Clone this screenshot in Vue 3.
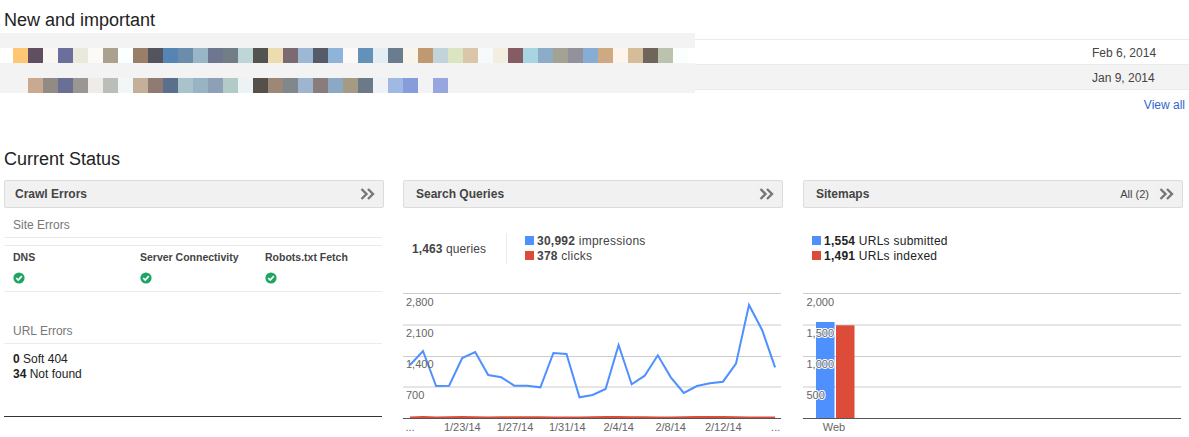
<script setup>
const rowA = ['#ffc675','#5f4f60','#f9f6f4','#6a6f9b','#ebe8dc','#fbfaf6','#aca08e','#fcffff','#9a7f68','#54545e','#5585b5','#6b8dab','#98b6c8','#6f7690','#727e85','#bfd6d9','#53544f','#ecdcb0','#7b6b70','#9db8d4','#575a68','#8eb4da','#fbfaf8','#6391ba','#e3eef4','#6a7d8e','#f9f5ea','#c19971','#c2d4da','#dbe5c2','#dac7a8','#f6fafd','#f2eee0','#835c64','#a9d5e3','#8cacc8','#a4a195','#92919c','#87add4','#cfa981','#fdf4ec','#d4bd98','#6f655b','#bbc3ae','#fafefd']
const rowB = ['transparent','#c9aa90','#918b84','#6a6f96','#9a9793','#efebe6','#babeb8','#f1f6f6','#c4af98','#8f7b72','#596f8c','#a9c3cd','#98b3c3','#8ea0b5','#b3cbc7','#edf2f4','#55504a','#9d8878','#80888b','#9db5cf','#8a7c7c','#8ba9c5','#a59b84','#6b7a89','#eef2f5','#a0b9e2','#879cdb','transparent','#98a6e0']

const checks = [
  { name: 'DNS', width: 127 },
  { name: 'Server Connectivity', width: 125 },
  { name: 'Robots.txt Fetch', width: 110 }
]

// y values of the impressions line, in page pixels
const impressions = [365,351,386,385.7,358,352,375,377.3,385.7,385.7,387.3,353,354,397.3,395,389,345,384.3,375.7,355.3,377.3,393,386,383.3,381.7,363.7,305,330,367.3]
const blueLine = impressions.map((y, i) => `${(7 + i * 13.04).toFixed(1)},${(y - 293).toFixed(1)}`).join(' ')
const clicks = [124.4,124,124.4,124.2,124.1,124.2,124.4,124.3,124.2,124.2,124.3,124.4,124.4,124.4,124.2,124.1,124.1,124.2,124.3,124.4,124.4,124.3,124,123.9,124.1,124.3,124.4,124.4,124.4]
const redLine = clicks.map((y, i) => `${(7 + i * 13.04).toFixed(1)},${y}`).join(' ')

const grid = [0.5, 32, 63.5, 94]
const queryTicks = [
  { label: '2,800', y: 12.5 }, { label: '2,100', y: 43.5 }, { label: '1,400', y: 74.5 }, { label: '700', y: 105.5 }
]
const mapTicks = [
  { label: '2,000', y: 12.5 }, { label: '1,500', y: 43.5 }, { label: '1,000', y: 74.5 }, { label: '500', y: 105.5 }
]
const dates = [
  { label: '...', x: 7 }, { label: '1/23/14', x: 59.3 }, { label: '1/27/14', x: 112 }, { label: '1/31/14', x: 164.3 },
  { label: '2/4/14', x: 215.7 }, { label: '2/8/14', x: 267.7 }, { label: '2/12/14', x: 320.3 }, { label: '...', x: 372.7 }
]
</script>

<template>
  <div class="page">
    <h2 class="heading">New and important</h2>
    <div class="messages">
      <div class="msg"><span>Feb 6, 2014</span></div>
      <div class="msg shaded"><span>Jan 9, 2014</span></div>
      <div class="blurred">
        <div class="band"></div>
        <div class="swatches">
          <i v-for="(c, i) in rowA" :key="i" :style="{ background: c }"></i>
        </div>
        <div class="band"></div>
        <div class="swatches grey">
          <i v-for="(c, i) in rowB" :key="i" :style="{ background: c }"></i>
        </div>
      </div>
    </div>
    <div class="view-all"><a>View all</a></div>

    <h2 class="heading status">Current Status</h2>
    <div class="panels">
      <section class="panel">
        <header class="bar">
          <span class="title">Crawl Errors</span>
          <svg class="chev" width="15" height="12" viewBox="0 0 15 12"><path d="M1.5 1l5 5-5 5M8 1l5 5-5 5" fill="none" stroke="#777" stroke-width="2.4"/></svg>
        </header>
        <h3 class="sub">Site Errors</h3>
        <div class="checks">
          <div v-for="c in checks" :key="c.name" class="check" :style="{ width: c.width + 'px' }">
            <div class="check-name">{{ c.name }}</div>
            <svg width="12" height="12" viewBox="0 0 12 12"><circle cx="6" cy="6" r="5.6" fill="#1fa463"/><path d="M3.2 6l2 2 3.6-3.8" fill="none" stroke="#fff" stroke-width="1.7"/></svg>
          </div>
        </div>
        <h3 class="sub url">URL Errors</h3>
        <div class="url-list">
          <div><b>0</b> Soft 404</div>
          <div><b>34</b> Not found</div>
        </div>
      </section>

      <section class="panel">
        <header class="bar">
          <span class="title">Search Queries</span>
          <svg class="chev" width="15" height="12" viewBox="0 0 15 12"><path d="M1.5 1l5 5-5 5M8 1l5 5-5 5" fill="none" stroke="#777" stroke-width="2.4"/></svg>
        </header>
        <div class="summary">
          <div class="total"><b>1,463</b> queries</div>
          <div class="legend">
            <div><i class="blue"></i><b>30,992</b> impressions</div>
            <div><i class="red"></i><b>378</b> clicks</div>
          </div>
        </div>
        <svg class="chart" width="378" height="144" viewBox="0 0 378 144">
          <line v-for="y in grid" :key="y" x1="0" x2="378" :y1="y" :y2="y" stroke="#ccc" />
          <polyline :points="blueLine" fill="none" stroke="#4d90fe" stroke-width="2" />
          <text v-for="t in queryTicks" :key="t.label" x="3" :y="t.y" class="tick">{{ t.label }}</text>
          <polyline :points="redLine" fill="none" stroke="#dd4b39" stroke-width="2" />
          <line x1="0" x2="378" y1="125.5" y2="125.5" stroke="#555" />
          <text v-for="(d, i) in dates" :key="i" :x="d.x" y="138" class="tick" text-anchor="middle">{{ d.label }}</text>
        </svg>
      </section>

      <section class="panel last">
        <header class="bar">
          <span class="title">Sitemaps</span>
          <span class="all">All (2)</span>
          <svg class="chev" width="15" height="12" viewBox="0 0 15 12"><path d="M1.5 1l5 5-5 5M8 1l5 5-5 5" fill="none" stroke="#777" stroke-width="2.4"/></svg>
        </header>
        <div class="summary maps">
          <div class="legend">
            <div><i class="blue"></i><b>1,554</b> URLs submitted</div>
            <div><i class="red"></i><b>1,491</b> URLs indexed</div>
          </div>
        </div>
        <svg class="chart" width="378" height="144" viewBox="0 0 378 144">
          <line v-for="y in grid" :key="y" x1="0" x2="378" :y1="y" :y2="y" stroke="#ccc" />
          <rect x="13" y="29" width="18.5" height="96" fill="#4d90fe" />
          <rect x="33" y="32.3" width="18.5" height="92.7" fill="#dd4b39" />
          <text v-for="t in mapTicks" :key="t.label" x="3.5" :y="t.y" class="tick halo">{{ t.label }}</text>
          <line x1="0" x2="378" y1="125.5" y2="125.5" stroke="#555" />
          <text x="31" y="138" class="tick" text-anchor="middle">Web</text>
        </svg>
      </section>
    </div>
  </div>
</template>

<style>
html, body {
  margin: 0;
  background: #fff;
  overflow: hidden;
}
</style>

<style scoped>
.page {
  width: 1189px;
  height: 437px;
  overflow: hidden;
  font-family: "Liberation Sans", Arial, sans-serif;
  font-size: 12px;
  color: #222;
}

.heading {
  margin: 0;
  padding: 10px 0 0 4px;
  height: 21px;
  line-height: 21px;
  font-size: 18px;
  font-weight: normal;
  color: #222;
}

.messages {
  position: relative;
  margin-top: 8px;
}

.msg {
  box-sizing: border-box;
  height: 25px;
  border-top: 1px solid #ebebeb;
  display: flex;
  align-items: center;
  padding: 2px 0 0 1092px;
  color: #444;
}

.shaded {
  background: #f3f3f3;
  height: 26px;
  border-bottom: 1px solid #ebebeb;
  padding-top: 1px;
}

.blurred {
  position: absolute;
  left: 0;
  top: -6px;
  width: 695px;
  background: #fff;
}

.band {
  height: 15px;
  background: #f3f3f3;
}

.swatches {
  display: flex;
  height: 15px;
  padding-left: 13px;
}

.swatches.grey {
  background: #f3f3f3;
}

.swatches i {
  display: block;
  width: 15px;
  height: 15px;
}

.view-all {
  margin-top: 8px;
  padding-right: 4px;
  height: 14px;
  line-height: 14px;
  text-align: right;
}

.view-all a {
  color: #36c;
}

.heading.status {
  padding-top: 37px;
}

.panels {
  display: flex;
  gap: 19px;
  margin: 10px 0 0 4px;
}

.panel {
  width: 380px;
}

.panel.last {
  margin-left: 1px;
}

.bar {
  box-sizing: border-box;
  height: 28px;
  display: flex;
  align-items: center;
  padding: 0 8px 0 10px;
  background: #f1f1f1;
  border: 1px solid #dcdcdc;
  border-radius: 2px;
}

.panel + .panel .bar {
  padding-left: 12px;
}

.title {
  flex: 1;
  font-weight: bold;
  color: #444;
}

.all {
  font-size: 11px;
  color: #444;
  margin-right: 10px;
}

.sub {
  box-sizing: content-box;
  width: 369px;
  margin: 0;
  padding-left: 9px;
  height: 29px;
  line-height: 34px;
  font-size: 12px;
  font-weight: normal;
  color: #777;
  border-bottom: 1px solid #ebebeb;
}

.checks {
  box-sizing: border-box;
  display: flex;
  width: 378px;
  height: 47px;
  margin-top: 7px;
  padding: 5px 0 0 9px;
  border-top: 1px solid #ebebeb;
  border-bottom: 1px solid #ebebeb;
}

.check-name {
  font-size: 10.5px;
  font-weight: bold;
  line-height: 12px;
  color: #444;
  margin-bottom: 9px;
}

.sub.url {
  margin-top: 17px;
  height: 34px;
  line-height: 45px;
}

.url-list {
  width: 369px;
  padding: 8px 0 0 9px;
  line-height: 15px;
  height: 64px;
  border-bottom: 1px solid #333;
}

.summary {
  box-sizing: border-box;
  height: 85px;
  display: flex;
  align-items: center;
  padding: 0 0 4px 9px;
  color: #444;
}

.summary.maps {
  color: #222;
}

.total {
  width: 94px;
  height: 31px;
  line-height: 33px;
  border-right: 1px solid #ebebeb;
  margin-right: 18px;
  letter-spacing: 0.1px;
}

.legend {
  line-height: 15px;
  letter-spacing: 0.25px;
}

.legend i {
  display: inline-block;
  width: 9px;
  height: 9px;
  margin-right: 3px;
}

.blue {
  background: #4d90fe;
}

.red {
  background: #dd4b39;
}

.chart {
  display: block;
}

.tick {
  font-size: 11px;
  fill: #666;
}

.halo {
  paint-order: stroke;
  stroke: #fff;
  stroke-width: 2px;
}
</style>
